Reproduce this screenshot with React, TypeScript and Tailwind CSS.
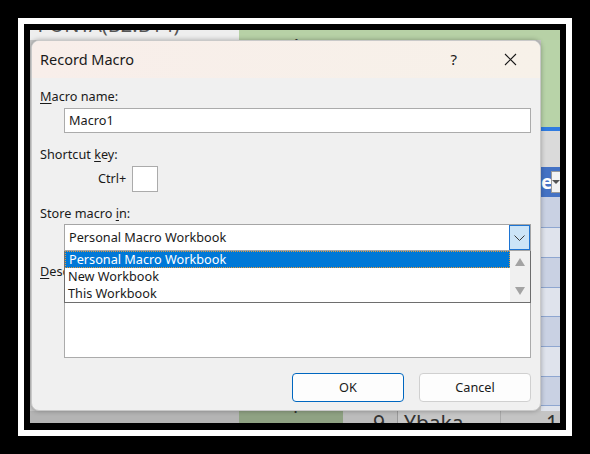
import React from 'react';

const FONT = { fontFamily: '"Noto Sans", "Open Sans", Arial, sans-serif' };

function Spreadsheet() {
  return (
    <div className="flex h-full flex-col">
      {/* formula bar sliver above the dialog */}
      <div className="flex h-[10px] overflow-hidden">
        <div className="relative w-[209px] overflow-hidden bg-[#eeeeee]">
          <span className="absolute left-[-4px] top-[-15px] text-[20px] leading-[20px] text-[#555]">=PUNTA(B2:B14)</span>
        </div>
        <div className="relative flex-1 bg-[#b7d1a6]">
          <span className="absolute left-[52px] top-[6px] text-[18px] leading-[18px] text-[#333]">1</span>
        </div>
      </div>
      <div className="flex flex-1">
        <div className="flex-1 bg-[#c8c8c8]" />
        <div className="flex w-[19px] flex-col">
          <div className="h-[87px] bg-[#b8d3a8]" />
          <div className="h-[4px] bg-[#2f7be0]" />
          <div className="h-[36px] bg-[#dadada]" />
          <div className="flex h-[30px] items-center bg-[#4472c4]">
            <span className="text-[20px] font-bold leading-none text-white">e</span>
            <div className="ml-[-2px] flex h-[22px] w-[14px] items-center justify-center border border-[#9a9a9a] bg-[#f4f4f4]">
              <div className="h-0 w-0 border-x-[4px] border-t-[4px] border-x-transparent border-t-[#555]" />
            </div>
          </div>
          <div className="h-[31px] border-b border-[#8ea6d0] bg-[#c9d1e3]" />
          <div className="h-[30px] border-b border-[#8ea6d0] bg-[#dfe3ec]" />
          <div className="h-[30px] border-b border-[#8ea6d0] bg-[#c9d1e3]" />
          <div className="h-[29px] border-b border-[#8ea6d0] bg-[#dfe3ec]" />
          <div className="h-[30px] border-b border-[#8ea6d0] bg-[#c9d1e3]" />
          <div className="h-[30px] border-b border-[#8ea6d0] bg-[#dfe3ec]" />
          <div className="h-[29px] border-b border-[#8ea6d0] bg-[#c9d1e3]" />
          <div className="relative flex-1 bg-[#dfe3ec]">
            <span className="absolute left-[3px] top-[2px] text-[22px] leading-[22px] text-[#222]">1</span>
          </div>
        </div>
      </div>
      {/* row peeking below the dialog */}
      <div className="flex h-[12px] overflow-hidden text-[21px] leading-[21px] text-[#333]">
        <div className="w-[209px] bg-[#b4b4b4]" />
        <div className="relative w-[104px] bg-[#8fa283]">
          <span className="absolute left-[50px] top-[-16px]">1</span>
        </div>
        <div className="relative w-[54px] bg-[#bcbcbc]">
          <span className="absolute right-[12px] top-[2px]">9</span>
        </div>
        <div className="relative w-[103px] border-l border-[#999] bg-[#c6c6c6]">
          <span className="absolute left-[6px] top-[2px]">Ybaka</span>
        </div>
        <div className="relative flex-1 border-l border-[#aaa] bg-[#c4c4c4]">
          <span className="absolute right-[2px] top-[2px]">1</span>
        </div>
      </div>
    </div>
  );
}

function Label({ text, mn, className = '' }: { text: string; mn: number; className?: string }) {
  return (
    <div className={`h-[17px] text-[12.7px] leading-[17px] text-[#1a1a1a] ${className}`}>
      {text.slice(0, mn)}
      <span className="underline underline-offset-[2px]">{text[mn]}</span>
      {text.slice(mn + 1)}
    </div>
  );
}

function Dialog() {
  return (
    <div
      className="absolute left-[1px] top-[10px] flex h-[371px] w-[510px] flex-col overflow-hidden rounded-[8px] border border-[#c9c9c9] bg-[#f0f0f0] shadow-[0_0_5px_rgba(0,0,0,0.3)]"
      style={FONT}
    >
      {/* title bar */}
      <div className="flex h-[37px] shrink-0 items-center bg-gradient-to-r from-[#f8eeea] to-[#f7f1e9] pl-[8px]">
        <span className="flex-1 text-[14.5px] text-[#1a1a1a]">Record Macro</span>
        <span className="mr-[47px] text-[15px] text-[#1a1a1a]">?</span>
        <svg width="13" height="13" viewBox="0 0 13 13" className="mr-[23px]">
          <path d="M1 1L12 12M12 1L1 12" stroke="#1a1a1a" strokeWidth="1.1" />
        </svg>
      </div>

      <div className="relative flex flex-1 flex-col px-[8px]">
        <Label text="Macro name:" mn={0} className="mt-[10px]" />
        <div className="ml-[24px] mr-[1px] mt-[3px] flex h-[25px] items-center border border-[#ababab] bg-white pl-[4px] text-[12.7px] text-[#1a1a1a]">
          Macro1
        </div>

        <Label text="Shortcut key:" mn={9} className="mt-[13px]" />
        <div className="mt-[3px] flex h-[26px] items-center">
          <span className="ml-[58px] text-[12.7px] text-[#1a1a1a]">Ctrl+</span>
          <div className="ml-[6px] h-[26px] w-[26px] border border-[#ababab] bg-white" />
        </div>

        <Label text="Store macro in:" mn={12} className="mt-[13px]" />
        <div className="ml-[24px] mr-[1px] mt-[2px] flex h-[27px] items-center border border-[#a5a5a5] bg-white text-[12.7px] text-[#1a1a1a]">
          <span className="flex-1 pl-[4px]">Personal Macro Workbook</span>
          <div className="flex h-[25px] w-[21px] items-center justify-center border border-[#1d74d3] bg-[#cce4f7]">
            <svg width="11" height="6" viewBox="0 0 11 6">
              <path d="M0.5 0.5L5.5 5.5L10.5 0.5" fill="none" stroke="#3c3c3c" strokeWidth="1" />
            </svg>
          </div>
        </div>

        <Label text="Description:" mn={0} className="mt-[12px]" />
        <div className="ml-[24px] mr-[1px] mt-[6px] h-[72px] border border-[#ababab] bg-white" />

        {/* open dropdown list */}
        <div className="absolute left-[32px] top-[173px] flex h-[52px] w-[467px] border-x border-b border-[#6e6e6e] bg-white text-[12.7px] leading-[17px] text-[#1a1a1a]">
          <div className="flex flex-1 flex-col">
            <div className="h-[17px] border border-dotted border-[#e59a3c] bg-[#0078d7] pl-[3px] leading-[15px] text-white">
              Personal Macro Workbook
            </div>
            <div className="h-[17px] pl-[3px]">New Workbook</div>
            <div className="h-[17px] pl-[3px]">This Workbook</div>
          </div>
          <div className="flex w-[20px] flex-col items-center justify-between bg-[#f0f0f0] py-[7px]">
            <div className="h-0 w-0 border-x-[5px] border-b-[8px] border-x-transparent border-b-[#a3a3a3]" />
            <div className="h-0 w-0 border-x-[5px] border-t-[8px] border-x-transparent border-t-[#a3a3a3]" />
          </div>
        </div>

        <div className="mt-[15px] flex justify-end gap-[15px] pr-[1px]">
          <button className="h-[29px] w-[112px] rounded-[4px] border border-[#0067c0] bg-[#fdfdfd] text-[12.7px] text-[#1a1a1a]">
            OK
          </button>
          <button className="h-[29px] w-[112px] rounded-[4px] border border-[#d0d0d0] bg-[#fdfdfd] text-[12.7px] text-[#1a1a1a]">
            Cancel
          </button>
        </div>
      </div>
    </div>
  );
}

export default function App() {
  return (
    <div className="h-[454px] w-[590px] bg-black p-[18px]">
      <div className="h-[418px] w-[554px] bg-white p-[6px]">
        <div className="h-[406px] w-[542px] bg-black px-[6px] pb-[7px] pt-[6px]">
          <div className="relative h-[393px] w-[530px] overflow-hidden" style={FONT}>
            <Spreadsheet />
            <Dialog />
          </div>
        </div>
      </div>
    </div>
  );
}
